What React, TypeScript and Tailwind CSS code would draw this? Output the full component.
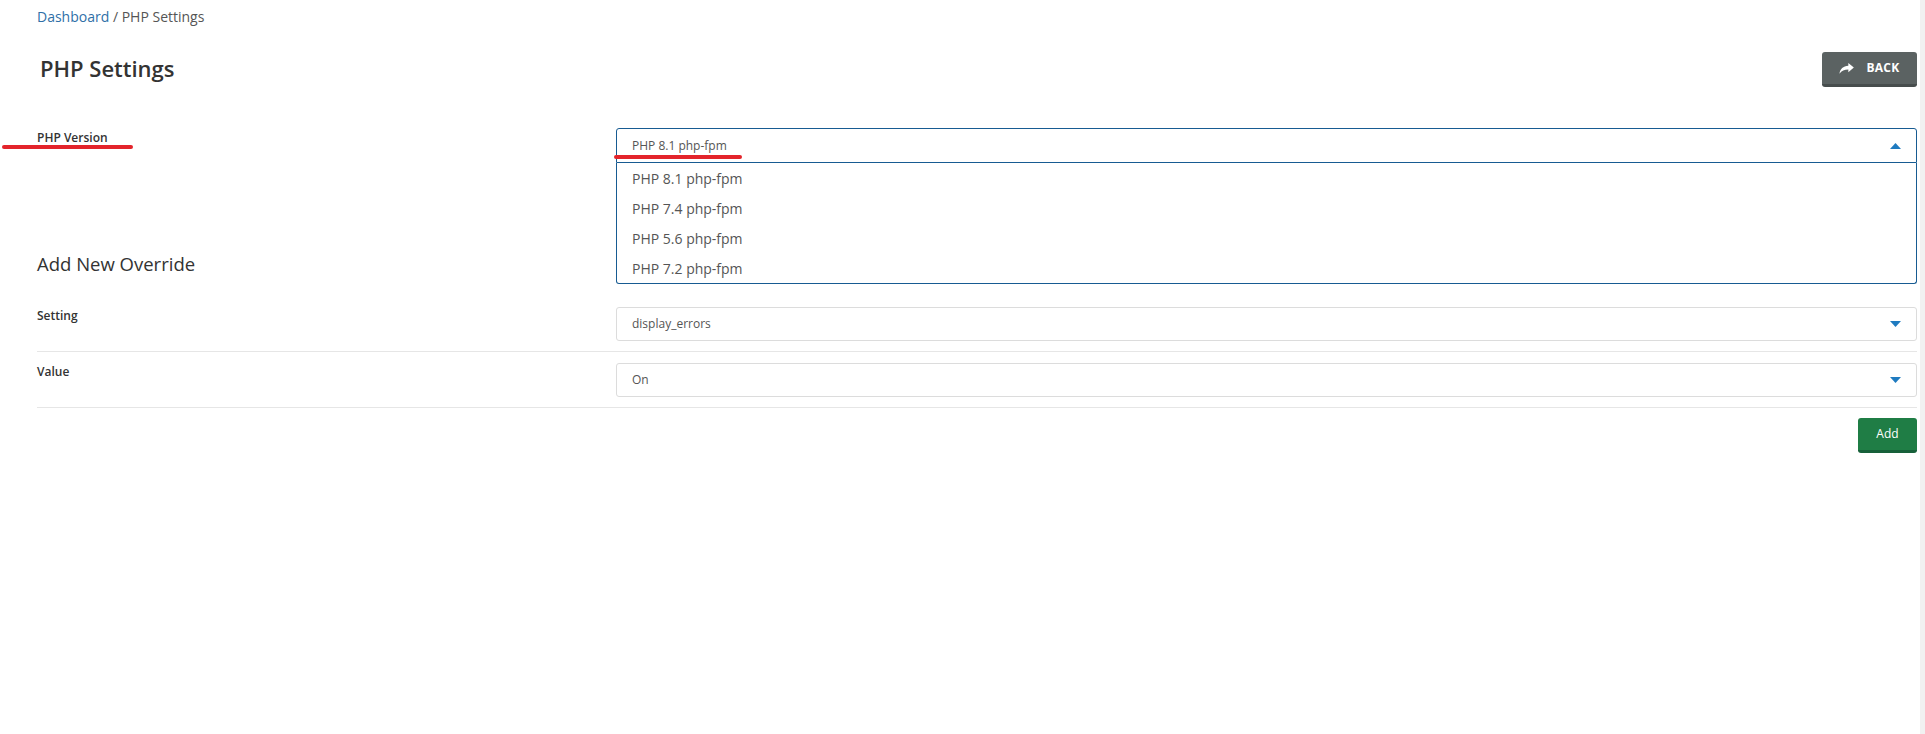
import { type ReactNode } from 'react'

function ShareIcon() {
  return (
    <svg width="15" height="11" viewBox="0 0 24 18" fill="none" xmlns="http://www.w3.org/2000/svg">
      <path d="M15 0 L24 7.5 L15 15 V10.5 C8.5 10.5 4 12.5 0.5 17.5 C1.5 10 6.5 5 15 4.5 Z" fill="#ffffff" />
    </svg>
  )
}

function Caret({ up = false }: { up?: boolean }) {
  return (
    <svg width="11" height="6" viewBox="0 0 11 6" xmlns="http://www.w3.org/2000/svg">
      {up ? <path d="M0 6 L5.5 0 L11 6 Z" fill="#1f7bc0" /> : <path d="M0 0 L11 0 L5.5 6 Z" fill="#1f7bc0" />}
    </svg>
  )
}

function Row({ label, children, divider = true }: { label: string; children: ReactNode; divider?: boolean }) {
  return (
    <div className={`flex ${divider ? 'border-b border-[#e6e6e6] pb-[10px]' : ''}`}>
      <div className="w-[579px] shrink-0 pt-[1px] text-[12px] leading-[16px] font-semibold text-[#333]">{label}</div>
      <div className="flex-1">{children}</div>
    </div>
  )
}

function ClosedSelect({ value }: { value: string }) {
  return (
    <div className="flex h-[34px] items-center justify-between rounded-[3px] border border-[#dcdcdc] pl-[15px] pr-[15px] text-[12px] text-[#555]">
      <span>{value}</span>
      <Caret />
    </div>
  )
}

const versions = ['PHP 8.1 php-fpm', 'PHP 7.4 php-fpm', 'PHP 5.6 php-fpm', 'PHP 7.2 php-fpm']

export default function App() {
  return (
    <div className="flex h-[734px] w-full bg-white" style={{ fontFamily: '"Open Sans", "Noto Sans", sans-serif' }}>
      <div className="flex-1 pl-[37px] pr-[3px]">
        <div className="pt-[7px] text-[14px] leading-[20px]">
          <span className="text-[#2f6fa7]">Dashboard</span>
          <span className="text-[#555]"> / PHP Settings</span>
        </div>

        <div className="mt-[25px] flex items-center justify-between">
          <h1 className="pb-[4px] pl-[3px] text-[22px] leading-[28px] font-semibold text-[#333]">PHP Settings</h1>
          <button className="flex h-[35px] w-[95px] items-center justify-center gap-[12px] rounded-[3px] border-b-[3px] border-[#474d4d] bg-[#5b6262] text-[12px] font-bold tracking-[0.3px] text-white">
            <ShareIcon />
            <span>BACK</span>
          </button>
        </div>

        {/* PHP version with the select opened */}
        <div className="mt-[41px] flex">
          <div className="relative w-[579px] shrink-0 pt-[2px] text-[12px] leading-[16px] font-semibold text-[#333]">
            PHP Version
            <div className="absolute left-[-35px] top-[17px] h-[4px] w-[131px] rounded-full bg-[#e3242b]" />
          </div>
          <div className="relative flex-1">
            <div className="flex h-[35px] items-center justify-between rounded-t-[3px] border border-[#175b92] pl-[15px] pr-[15px] text-[12px] text-[#555]">
              <span>PHP 8.1 php-fpm</span>
              <Caret up />
            </div>
            <div className="absolute left-[-2px] top-[27px] h-[4px] w-[128px] rounded-full bg-[#e3242b]" />
            <div className="absolute left-0 right-0 top-full rounded-b-[3px] border border-t-0 border-[#175b92] bg-white">
              {versions.map((v) => (
                <div key={v} className="flex h-[30px] items-center pl-[15px] text-[14px] text-[#555]">
                  {v}
                </div>
              ))}
            </div>
          </div>
        </div>

        <h2 className="mt-[89px] text-[18.5px] leading-[24px] font-medium text-[#333]">Add New Override</h2>

        <div className="mt-[31px] flex flex-col gap-[11px]">
          <Row label="Setting">
            <ClosedSelect value="display_errors" />
          </Row>
          <Row label="Value">
            <ClosedSelect value="On" />
          </Row>
        </div>

        <div className="mt-[10px] flex justify-end">
          <button className="h-[35px] w-[59px] rounded-[3px] border-b-[3px] border-[#17603a] bg-[#1f7d45] text-[12px] text-white">
            Add
          </button>
        </div>
      </div>
      <div className="w-[5px] shrink-0 bg-[#f1f1f1]" />
    </div>
  )
}
